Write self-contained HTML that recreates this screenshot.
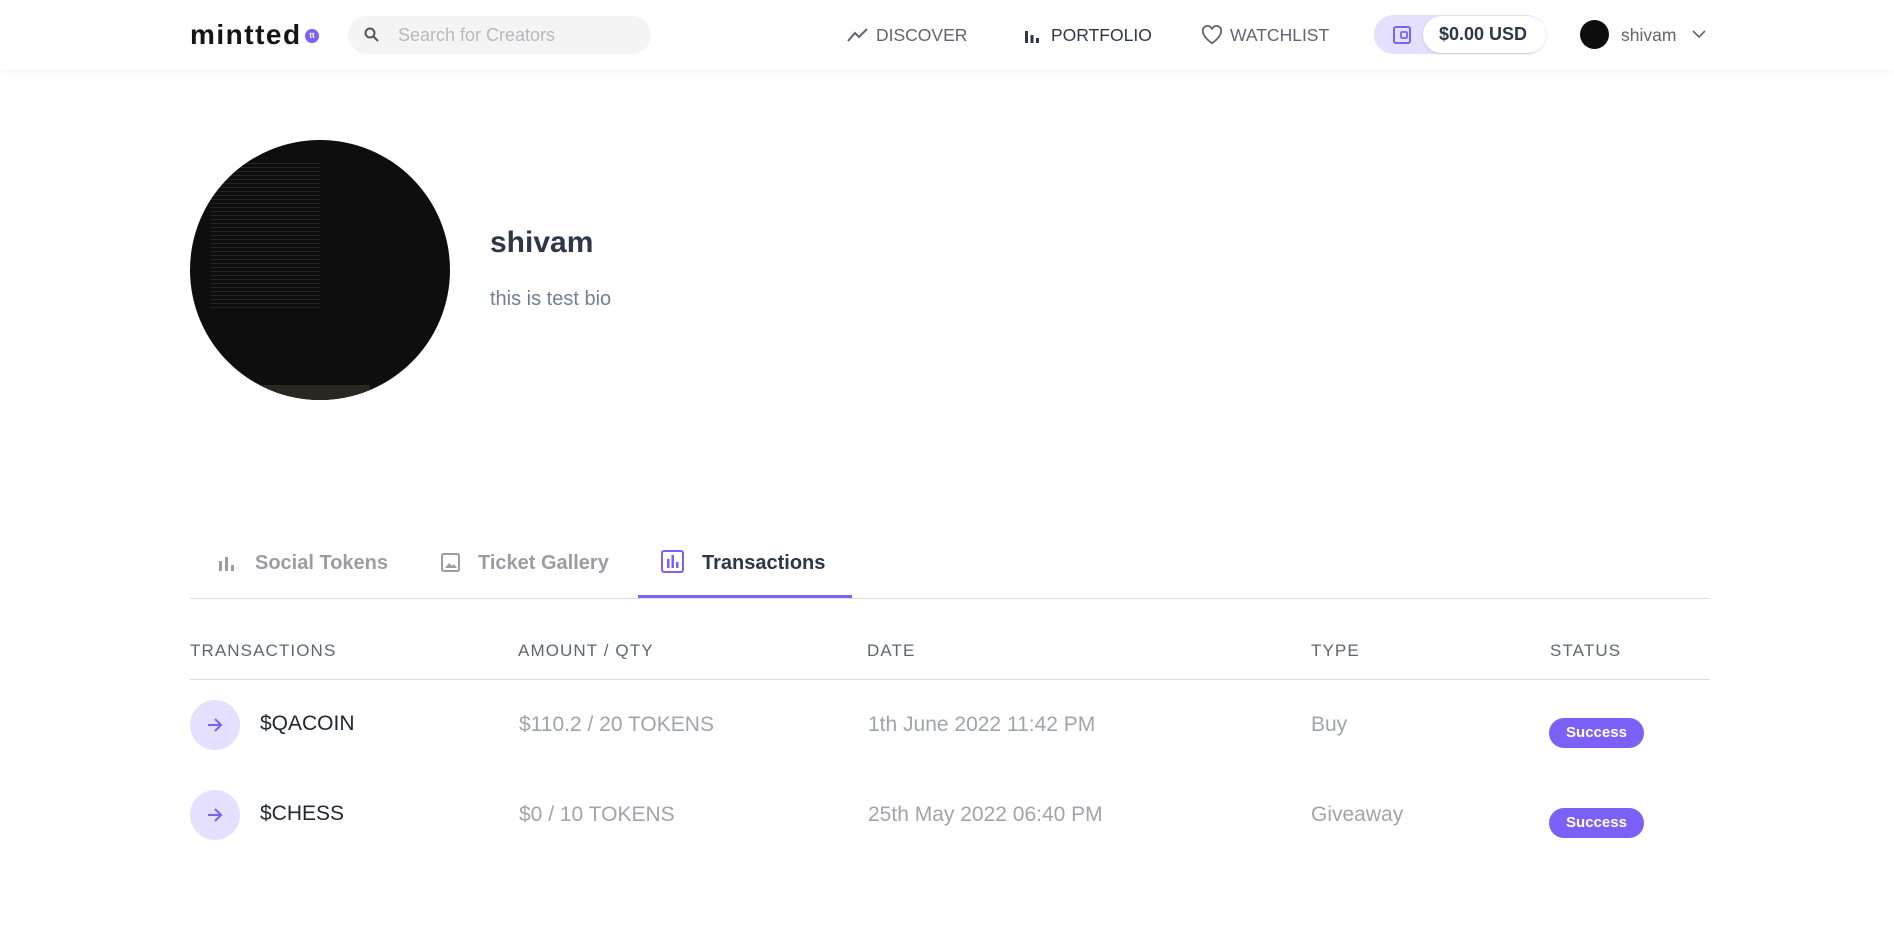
<!DOCTYPE html>
<html><head><meta charset="utf-8">
<style>
*{margin:0;padding:0;box-sizing:border-box}
body{width:1894px;height:936px;background:#fff;font-family:"Liberation Sans",sans-serif;position:relative;overflow:hidden;color:#2d3748}
.abs{position:absolute}
.hdr{position:absolute;left:0;top:0;width:1894px;height:70px;background:#fff;box-shadow:0 2px 6px rgba(0,0,0,0.04)}
.nav{position:absolute;top:24px;font-size:17.5px;color:#5f6670;line-height:22px;white-space:nowrap}
.th{position:absolute;top:641px;font-size:17px;letter-spacing:1.1px;color:#5f6670;line-height:20px}
.td{position:absolute;font-size:21px;color:#a0a4ab;line-height:24px}
.nm{position:absolute;left:260px;font-size:21px;color:#1f2733;line-height:24px}
.circ{position:absolute;left:190px;width:50px;height:50px;border-radius:50%;background:#e4e0fd}
.badge{position:absolute;left:1549px;width:95px;height:30px;border-radius:15px;background:#7b61f5;color:#fff;font-size:15px;font-weight:bold;text-align:center;line-height:30px}
.tab{position:absolute;top:551px;font-size:20px;font-weight:bold;color:#9a9ea4;line-height:24px}
</style></head><body>
<div class="hdr"></div>
<div class="abs" style="left:190px;top:19px;font-size:28px;font-weight:bold;color:#151515;letter-spacing:1.5px;line-height:32px">mintted</div>
<div class="abs" style="left:305px;top:29px;width:14px;height:14px;border-radius:50%;background:#7b61f5;color:#fff;font-size:8px;text-align:center;line-height:14px;font-weight:bold">tt</div>
<div class="abs" style="left:348px;top:16px;width:303px;height:38px;border-radius:19px;background:#f4f4f5"></div>
<svg class="abs" style="left:363px;top:26px" width="18" height="18" viewBox="0 0 18 18"><circle cx="7" cy="7" r="4.5" fill="none" stroke="#555" stroke-width="2"/><path d="M10.5 10.5L15 15" stroke="#555" stroke-width="2"/></svg>
<div class="abs" style="left:398px;top:24px;font-size:18px;color:#b7b9bd;line-height:22px">Search for Creators</div>

<svg class="abs" style="left:847px;top:28px" width="22" height="14" viewBox="0 0 22 14"><path d="M1 13L8 5l4 4 8-8" fill="none" stroke="#5f6670" stroke-width="2"/></svg>
<div class="nav" style="left:876px">DISCOVER</div>
<svg class="abs" style="left:1024px;top:28px" width="16" height="16" viewBox="0 0 16 16"><rect x="1" y="3" width="3" height="12" fill="#2d3748"/><rect x="6.5" y="7" width="3" height="8" fill="#2d3748"/><rect x="12" y="10" width="3" height="5" fill="#2d3748"/></svg>
<div class="nav" style="left:1051px;color:#2d3748">PORTFOLIO</div>
<svg class="abs" style="left:1201px;top:25px" width="22" height="20" viewBox="0 0 24 22"><path d="M12 20S2 13.5 2 7.2A5 5 0 0 1 12 5a5 5 0 0 1 10 2.2C22 13.5 12 20 12 20z" fill="none" stroke="#5f6670" stroke-width="2"/></svg>
<div class="nav" style="left:1230px">WATCHLIST</div>

<div class="abs" style="left:1374px;top:15px;width:172px;height:39px;border-radius:20px;background:#e4e0fd"></div>
<svg class="abs" style="left:1392px;top:25px" width="20" height="20" viewBox="0 0 20 20"><rect x="2" y="2" width="16" height="16" rx="2" fill="none" stroke="#7b61f5" stroke-width="2"/><rect x="9" y="7" width="6" height="6" rx="1" fill="none" stroke="#7b61f5" stroke-width="1.8"/></svg>
<div class="abs" style="left:1423px;top:16px;width:123px;height:37px;border-radius:19px;background:#fff;box-shadow:0 1px 3px rgba(0,0,0,0.12)"></div>
<div class="abs" style="left:1439px;top:23px;font-size:18px;font-weight:bold;color:#2d3748;line-height:22px">$0.00 USD</div>
<div class="abs" style="left:1580px;top:20px;width:29px;height:29px;border-radius:50%;background:#0d0d0d"></div>
<div class="nav" style="left:1621px">shivam</div>
<svg class="abs" style="left:1692px;top:29px" width="14" height="10" viewBox="0 0 14 10"><path d="M1 2l6 6 6-6" fill="none" stroke="#5f6670" stroke-width="1.6"/></svg>

<div class="abs" style="left:190px;top:140px;width:260px;height:260px;border-radius:50%;background:#0e0e0e;overflow:hidden">
<div style="position:absolute;left:20px;top:20px;width:110px;height:150px;background:repeating-linear-gradient(#0e0e0e 0 3px,#3a3a3a 3px 4px);opacity:0.5"></div>
<div style="position:absolute;left:60px;top:245px;width:120px;height:20px;background:#2a2620"></div>
</div>
<div class="abs" style="left:490px;top:226px;font-size:30px;font-weight:bold;color:#2d3748;line-height:34px">shivam</div>
<div class="abs" style="left:490px;top:287px;font-size:20px;color:#718096;line-height:24px">this is test bio</div>

<svg class="abs" style="left:219px;top:555px" width="16" height="16" viewBox="0 0 16 16"><rect x="0" y="6" width="3" height="10" fill="#9a9ea4"/><rect x="6" y="2" width="3" height="14" fill="#9a9ea4"/><rect x="12" y="10" width="3" height="6" fill="#9a9ea4"/></svg>
<div class="tab" style="left:255px">Social Tokens</div>
<svg class="abs" style="left:441px;top:553px" width="19" height="19" viewBox="0 0 19 19"><rect x="1" y="1" width="17" height="17" rx="1.5" fill="none" stroke="#9a9ea4" stroke-width="2"/><path d="M4 15l4-5 3 3 2-2 3 4z" fill="#9a9ea4"/></svg>
<div class="tab" style="left:478px">Ticket Gallery</div>
<svg class="abs" style="left:661px;top:550px" width="23" height="23" viewBox="0 0 23 23"><rect x="1" y="1" width="21" height="21" rx="2" fill="none" stroke="#7b61f5" stroke-width="2"/><rect x="6" y="9" width="2.5" height="9" fill="#7b61f5"/><rect x="10.5" y="5" width="2.5" height="13" fill="#7b61f5"/><rect x="15" y="12" width="2.5" height="6" fill="#7b61f5"/></svg>
<div class="tab" style="left:702px;color:#2d3748">Transactions</div>
<div class="abs" style="left:190px;top:598px;width:1520px;height:1px;background:#dcdde0"></div>
<div class="abs" style="left:638px;top:595px;width:214px;height:3px;background:#7b61f5"></div>

<div class="th" style="left:190px">TRANSACTIONS</div>
<div class="th" style="left:518px">AMOUNT / QTY</div>
<div class="th" style="left:867px">DATE</div>
<div class="th" style="left:1311px">TYPE</div>
<div class="th" style="left:1550px">STATUS</div>
<div class="abs" style="left:190px;top:679px;width:1520px;height:1px;background:#dcdde0"></div>

<div class="circ" style="top:700px"></div>
<svg class="abs" style="left:207px;top:718px" width="16" height="14" viewBox="0 0 16 14"><path d="M1 7h13M8 1l6 6-6 6" fill="none" stroke="#7b61f5" stroke-width="2"/></svg>
<div class="nm" style="top:712px">$QACOIN</div>
<div class="td" style="left:519px;top:713px">$110.2 / 20 TOKENS</div>
<div class="td" style="left:868px;top:713px">1th June 2022 11:42 PM</div>
<div class="td" style="left:1311px;top:713px">Buy</div>
<div class="badge" style="top:718px">Success</div>

<div class="circ" style="top:790px"></div>
<svg class="abs" style="left:207px;top:808px" width="16" height="14" viewBox="0 0 16 14"><path d="M1 7h13M8 1l6 6-6 6" fill="none" stroke="#7b61f5" stroke-width="2"/></svg>
<div class="nm" style="top:802px">$CHESS</div>
<div class="td" style="left:519px;top:803px">$0 / 10 TOKENS</div>
<div class="td" style="left:868px;top:803px">25th May 2022 06:40 PM</div>
<div class="td" style="left:1311px;top:803px">Giveaway</div>
<div class="badge" style="top:808px">Success</div>
</body></html>
